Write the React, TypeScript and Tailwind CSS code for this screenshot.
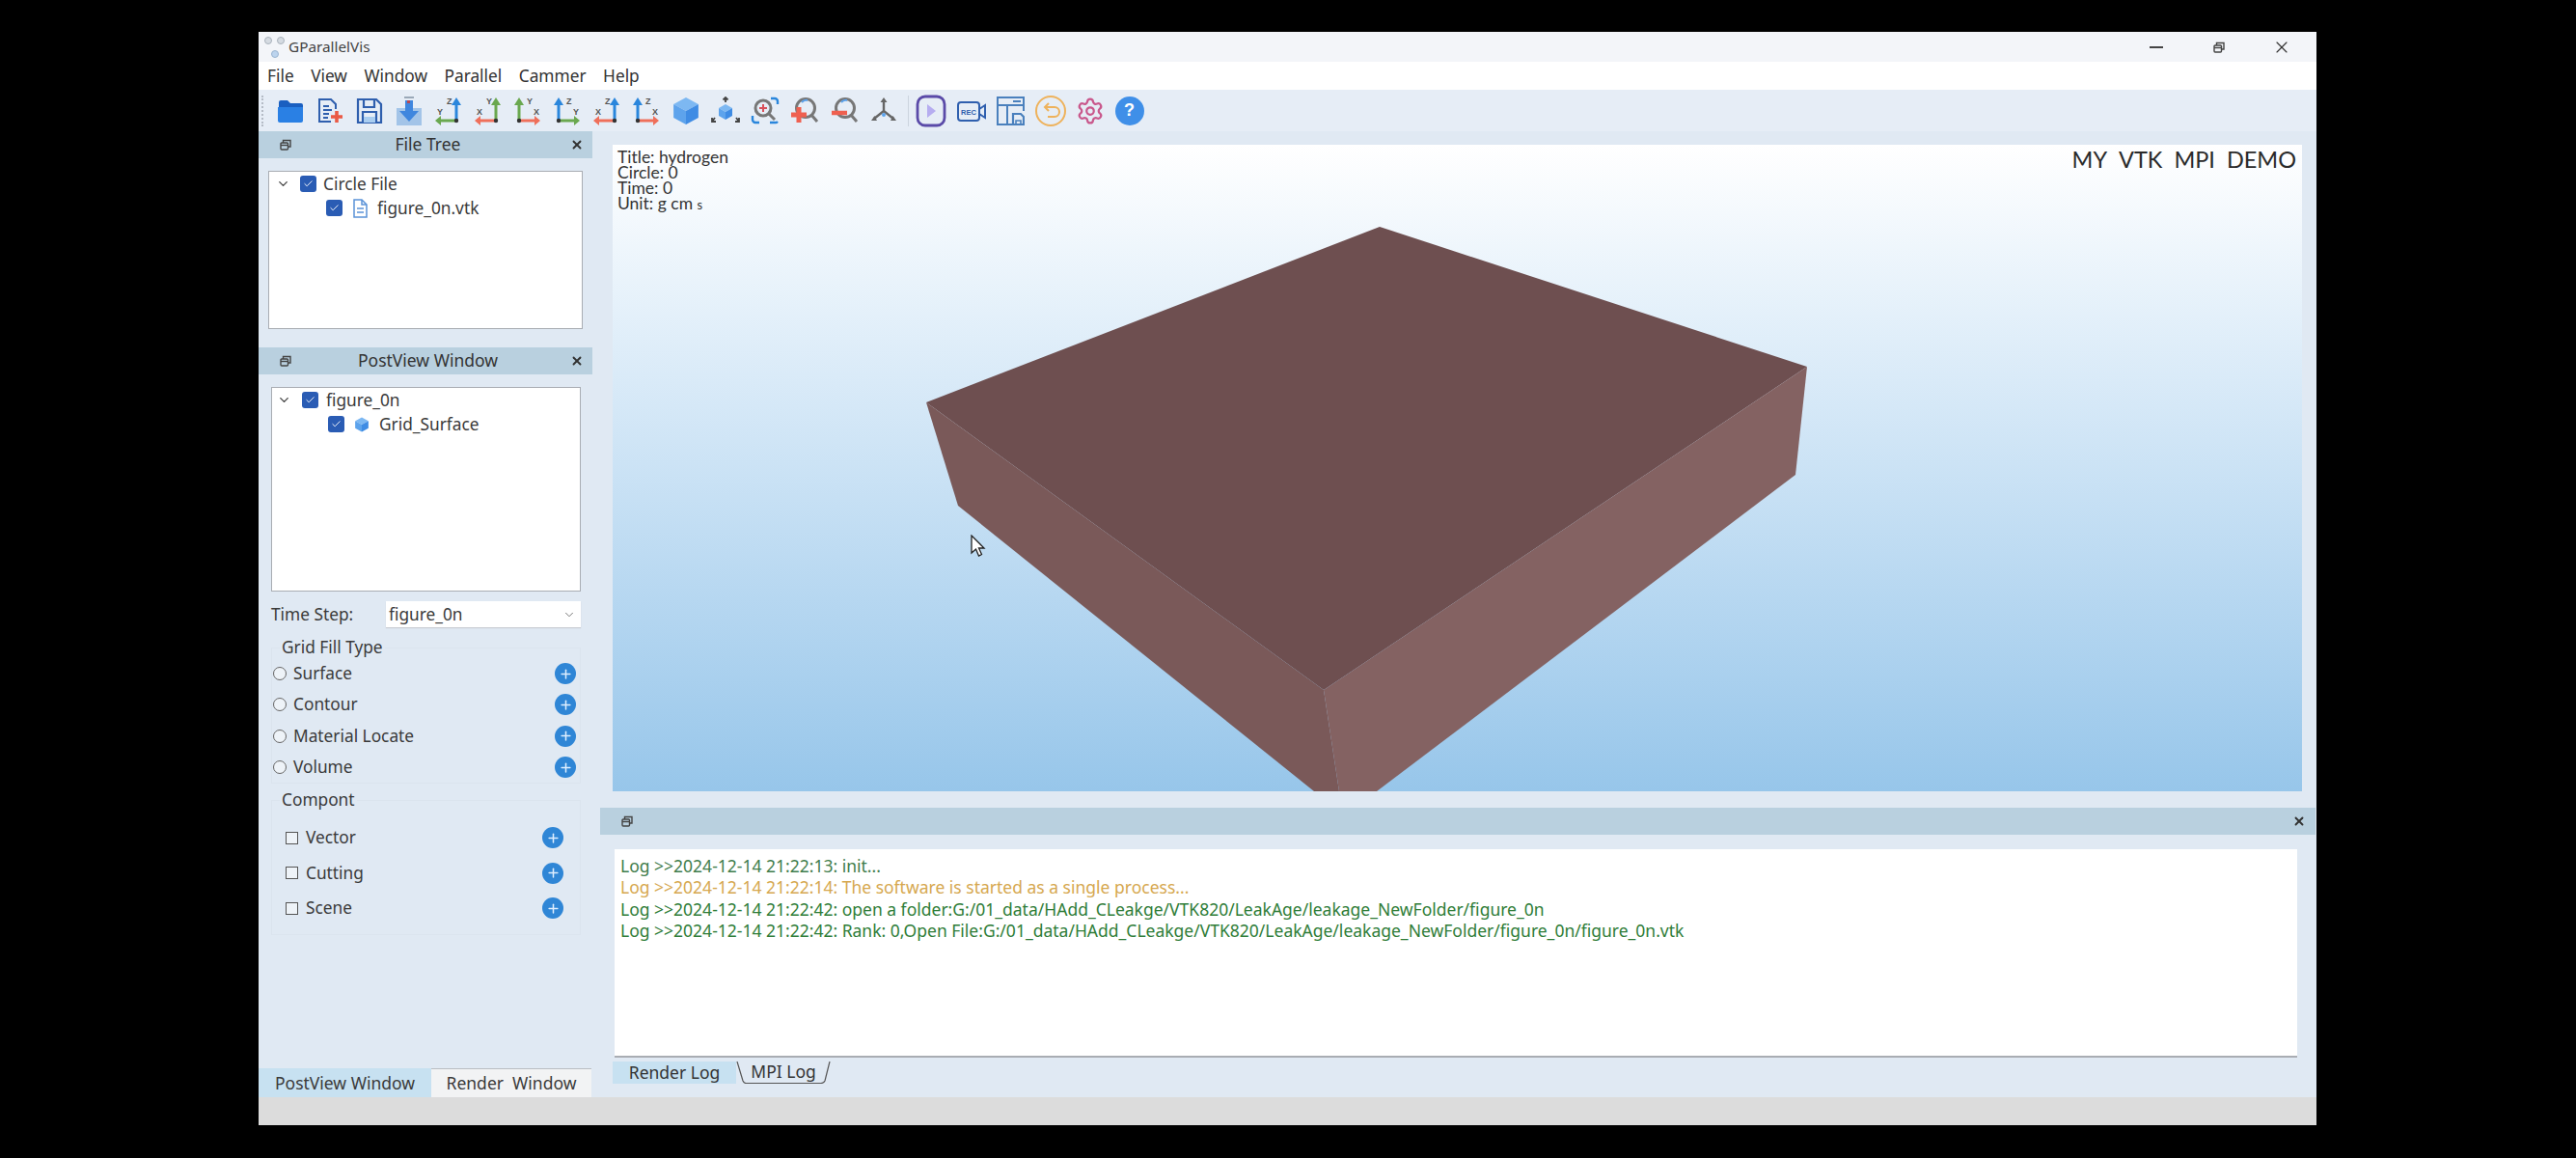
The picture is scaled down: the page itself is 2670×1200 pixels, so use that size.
import { Check, ChevronDown, Plus, Settings, X } from "lucide-react";

const RestoreIcon = () => (
  <svg width="12" height="12" viewBox="0 0 12 12" fill="none" stroke="#444" strokeWidth="1.4">
    <rect x="1" y="4" width="7.5" height="7" rx="1" />
    <path d="M3.5 4V1.5h7.5v6.5H8.5" />
    <path d="M1 6.5h7.5" />
  </svg>
);

type AxisProps = {
  dir: "left" | "right";
  hColor: string;
  hLabel: string;
  vColor: string;
  vLabel: string;
};

const AxisIcon = ({ dir, hColor, hLabel, vColor, vLabel }: AxisProps) => {
  const ox = dir === "left" ? 23 : 6;
  const tip = dir === "left" ? 1 : 28;
  const back = dir === "left" ? 7 : 22;
  return (
    <svg width="30" height="30" viewBox="0 0 30 30" className="shrink-0">
      <path d={`M${ox} 25H${back}`} stroke={hColor} strokeWidth="3" />
      <path d={`M${tip} 25L${back} 20V30Z`} fill={hColor} />
      <path d={`M${ox} 25V8`} stroke={vColor} strokeWidth="3" />
      <path d={`M${ox} 1L${ox - 5} 9H${ox + 5}Z`} fill={vColor} />
      <circle cx={ox} cy="25" r="2.2" fill="#333" />
      <text x={dir === "left" ? 13 : 14} y="8" fontSize="9" fontWeight="700" fill="#555" fontFamily="'Liberation Sans', sans-serif">
        {vLabel}
      </text>
      <text x={dir === "left" ? 3 : 21} y="19" fontSize="9" fontWeight="700" fill="#555" fontFamily="'Liberation Sans', sans-serif">
        {hLabel}
      </text>
    </svg>
  );
};

const CubeIcon = ({ size = 28 }: { size?: number }) => (
  <svg width={size} height={size} viewBox="0 0 28 28" className="shrink-0">
    <path d="M14 1L26 7.5L14 14L2 7.5Z" fill="#7db8f2" />
    <path d="M2 7.5L14 14V27L2 20.5Z" fill="#5da3ec" />
    <path d="M26 7.5L14 14V27L26 20.5Z" fill="#3f8ce4" />
  </svg>
);

const Toolbar = () => (
  <div className="flex h-[43px] items-center bg-[#e6edf6] pl-[3px]">
    <div className="h-[32px] w-[3px] border-l-2 border-dotted border-[#b5bcc6]" />
    <div className="ml-[12px] flex items-center gap-[11px]">
      <svg width="30" height="30" viewBox="0 0 30 30" className="shrink-0">
        <path d="M3 9V6a2 2 0 0 1 2-2h7l3 3h11a2 2 0 0 1 2 2v3H3Z" fill="#1a5fc0" />
        <path d="M2 11h26v14a2 2 0 0 1-2 2H4a2 2 0 0 1-2-2Z" fill="#2a80e4" />
      </svg>
      <svg width="30" height="30" viewBox="0 0 30 30" fill="none" className="shrink-0">
        <path d="M21 13V8l-5-5H4v23h12" stroke="#2f5fae" strokeWidth="2" />
        <path d="M8 10h6M8 14h9M8 18h6M8 22h5" stroke="#2f5fae" strokeWidth="2" />
        <path d="M22 15v12M16 21h12" stroke="#ea5a45" strokeWidth="3.6" />
      </svg>
      <svg width="30" height="30" viewBox="0 0 30 30" fill="none" stroke="#2f5fae" strokeWidth="2.2" className="shrink-0">
        <path d="M3 3h19l5 5v19H3Z" />
        <path d="M9 3v8h11V3M8 27V16h14v11" />
        <path d="M9 21h12v6H9Z" fill="#a9cdf0" stroke="none" />
      </svg>
      <svg width="30" height="30" viewBox="0 0 30 30" className="shrink-0">
        <path d="M2 12h26v18H2Z" fill="#a3c4e8" />
        <path d="M10 0h10v2H10Z" fill="#9aa8b8" />
        <path d="M11 4h8v11h6L15 26L5 15h6Z" fill="#3f86de" />
        <rect x="13" y="4" width="3" height="3" fill="#b54a55" />
      </svg>
      <AxisIcon dir="left" hColor="#6aa84f" hLabel="Y" vColor="#2a86dc" vLabel="Z" />
      <AxisIcon dir="left" hColor="#ef6f5a" hLabel="X" vColor="#6aa84f" vLabel="Y" />
      <AxisIcon dir="right" hColor="#ef6f5a" hLabel="X" vColor="#6aa84f" vLabel="Y" />
      <AxisIcon dir="right" hColor="#6aa84f" hLabel="Y" vColor="#2a86dc" vLabel="Z" />
      <AxisIcon dir="left" hColor="#ef6f5a" hLabel="X" vColor="#2a86dc" vLabel="Z" />
      <AxisIcon dir="right" hColor="#ef6f5a" hLabel="X" vColor="#2a86dc" vLabel="Z" />
      <CubeIcon size={30} />
      <svg width="30" height="30" viewBox="0 0 30 30" fill="none" className="shrink-0">
        <path d="M15 8l7 4-7 4-7-4Z" fill="#7db8f2" />
        <path d="M8 12l7 4v8l-7-4Z" fill="#5da3ec" />
        <path d="M22 12l-7 4v8l7-4Z" fill="#3f8ce4" />
        <path d="M15 6V1M12.5 3.5L15 1l2.500 2.500M4 22l-3 4M1 22v4h4M26 22l3 4M29 22v4h-4" stroke="#444" strokeWidth="1.800" />
      </svg>
      <svg width="30" height="30" viewBox="0 0 30 30" fill="none" className="shrink-0">
        <circle cx="13" cy="12" r="8" stroke="#777" strokeWidth="3" />
        <path d="M19 18l6 6" stroke="#777" strokeWidth="3" />
        <path d="M13 8v8M9 12h8" stroke="#d9505a" strokeWidth="2" />
        <path d="M21 2h4a3 3 0 0 1 3 3v3M2 20v4a3 3 0 0 0 3 3h4M20 27h5a3 3 0 0 0 3-1" stroke="#2a86dc" strokeWidth="2.400" />
      </svg>
      <svg width="30" height="30" viewBox="0 0 30 30" fill="none" className="shrink-0">
        <circle cx="16" cy="12" r="9.500" stroke="#777" strokeWidth="3" />
        <path d="M22 19l6 7" stroke="#777" strokeWidth="3" />
        <path d="M12 6a6 6 0 0 1 6-2" stroke="#5da3ec" strokeWidth="2" />
        <path d="M9 11v16M1 19h16" stroke="#ef6050" strokeWidth="5" />
      </svg>
      <svg width="30" height="30" viewBox="0 0 30 30" fill="none" className="shrink-0">
        <circle cx="16" cy="12" r="9.500" stroke="#777" strokeWidth="3" />
        <path d="M22 19l6 7" stroke="#777" strokeWidth="3" />
        <path d="M12 6a6 6 0 0 1 6-2" stroke="#5da3ec" strokeWidth="2" />
        <path d="M2 17h16" stroke="#ef6050" strokeWidth="4.500" />
      </svg>
      <svg width="30" height="30" viewBox="0 0 30 30" fill="none" stroke="#666" strokeWidth="2.400" className="shrink-0">
        <path d="M15 15V5M15 15L5 23M15 15l10 8" />
        <path d="M15 1l-3.500 5h7ZM2 25l6 0-2.500-5ZM28 25l-6 0 2.500-5Z" fill="#666" stroke="none" />
        <circle cx="15" cy="19" r="2" fill="#5da3ec" stroke="none" />
      </svg>
    </div>
    <div className="ml-[10px] h-[32px] w-px bg-[#ccd4de]" />
    <div className="ml-[7px] flex items-center gap-[10.5px]">
      <svg width="32" height="34" viewBox="0 0 32 34" fill="none" className="shrink-0">
        <rect x="2" y="2" width="28" height="30" rx="8" stroke="#5a4aa8" strokeWidth="2.800" />
        <path d="M12 10l9 7-9 7Z" fill="#b6adf0" />
      </svg>
      <svg width="30" height="30" viewBox="0 0 30 30" fill="none" className="shrink-0">
        <rect x="1" y="6" width="22" height="19" rx="3" stroke="#2f5fae" strokeWidth="2" />
        <path d="M23 13l6-4v13l-6-4" stroke="#2f5fae" strokeWidth="2" />
        <text x="4" y="19" fontSize="7.500" fontWeight="700" fill="#2f5fae" fontFamily="'Liberation Sans', sans-serif">
          REC
        </text>
      </svg>
      <svg width="30" height="32" viewBox="0 0 30 32" fill="none" stroke="#4a80bd" strokeWidth="2" className="shrink-0">
        <path d="M17 30H2V2h27v14" />
        <path d="M2 10h27M12 10v20M18 6h8" />
        <path d="M18 19h8l3 3v8H18Z" strokeWidth="2.200" />
        <path d="M21 30v-4h5v4" strokeWidth="1.600" />
      </svg>
      <svg width="32" height="34" viewBox="0 0 32 34" fill="none" stroke="#eeb25c" strokeWidth="2" className="shrink-0">
        <circle cx="16" cy="17" r="15" />
        <path d="M10 13h10a5 5 0 0 1 0 10h-7M14 9l-4 4 4 4" />
      </svg>
      <Settings size={30} strokeWidth={1.8} className="shrink-0 text-[#c9588c]" />
      <div className="flex h-[30px] w-[30px] shrink-0 items-center justify-center rounded-full bg-[#3f8fe8] font-['Liberation_Sans',sans-serif] text-[18px] font-bold text-white">
        ?
      </div>
    </div>
  </div>
);

const DockTitle = ({ title }: { title?: string }) => (
  <div className="flex h-[28px] items-center justify-between bg-[#b9d0df] pl-[22px] pr-[9px] text-[#333]">
    <RestoreIcon />
    <span className="mr-[6px] text-[17.5px] leading-none">{title}</span>
    <X size={14} strokeWidth={3.2} className="text-[#333]" />
  </div>
);

const Tick = ({ size = 17 }: { size?: number }) => (
  <span
    className="flex shrink-0 items-center justify-center rounded-[3px] bg-[#2a5cb4]"
    style={{ width: size, height: size }}
  >
    <Check size={11} strokeWidth={2} className="text-white" />
  </span>
);

const AddButton = () => (
  <span className="flex h-[22px] w-[22px] shrink-0 items-center justify-center rounded-full bg-[#2f86d6]">
    <Plus size={15} strokeWidth={2.4} className="text-[#dfefff]" />
  </span>
);

const fillRows = ["Surface", "Contour", "Material Locate", "Volume"];
const partRows = ["Vector", "Cutting", "Scene"];

const Sidebar = () => (
  <div className="flex w-[346px] shrink-0 flex-col text-[17.3px] text-[#3a3a3a]">
    <DockTitle title="File Tree" />
    <div className="ml-[10px] mt-[13px] h-[164px] w-[326px] border border-[#a9adb3] bg-white">
      <div className="flex h-[25px] items-center pl-[7px]">
        <ChevronDown size={15} strokeWidth={2.2} className="text-[#444]" />
        <span className="ml-[10px]"><Tick /></span>
        <span className="ml-[7px]">Circle File</span>
      </div>
      <div className="flex h-[25px] items-center pl-[59px]">
        <Tick />
        <svg width="18" height="20" viewBox="0 0 18 20" fill="none" stroke="#5b93d8" strokeWidth="1.500" className="ml-[9px] shrink-0">
          <path d="M3 1h8l5 5v13H3Z" />
          <path d="M6 10h7M6 14h7M11 1v5h5" />
        </svg>
        <span className="ml-[9px]">figure_0n.vtk</span>
      </div>
    </div>
    <div className="mt-[19px]">
      <DockTitle title="PostView Window" />
    </div>
    <div className="ml-[13px] mt-[13px] h-[212px] w-[321px] border border-[#a9adb3] bg-white">
      <div className="flex h-[25px] items-center pl-[5px]">
        <ChevronDown size={15} strokeWidth={2.2} className="text-[#444]" />
        <span className="ml-[11px]"><Tick /></span>
        <span className="ml-[8px]">figure_0n</span>
      </div>
      <div className="flex h-[25px] items-center pl-[58px]">
        <Tick />
        <span className="ml-[10px]"><CubeIcon size={16} /></span>
        <span className="ml-[10px]">Grid_Surface</span>
      </div>
    </div>
    <div className="ml-[13px] mt-[10px] flex h-[27px] w-[321px] items-center">
      <span className="w-[119px]">Time Step:</span>
      <div className="flex h-full flex-1 items-center justify-between bg-white pl-[3px] pr-[5px] shadow-[0_1px_1px_#c8ccd2]">
        <span>figure_0n</span>
        <ChevronDown size={14} strokeWidth={1.5} className="text-[#666]" />
      </div>
    </div>
    <fieldset className="ml-[13px] mt-[11px] w-[321px] border border-[#dbe4ee] pt-[1px]">
      <legend className="ml-[8px] px-[2px] leading-[20px]">Grid Fill Type</legend>
      {fillRows.map((row) => (
        <div key={row} className="flex h-[32.3px] items-center pl-px pr-[4px]">
          <span className="h-[14px] w-[14px] shrink-0 rounded-full border border-[#666] bg-[#eef3f8]" />
          <span className="ml-[7px] flex-1">{row}</span>
          <AddButton />
        </div>
      ))}
    </fieldset>
    <fieldset className="ml-[13px] mt-[7px] w-[321px] border border-[#dbe4ee] pb-[8px] pt-[11px]">
      <legend className="ml-[8px] px-[2px] leading-[20px]">Compont</legend>
      {partRows.map((row) => (
        <div key={row} className="flex h-[36.5px] items-center pl-[14px] pr-[17px]">
          <span className="h-[13px] w-[13px] shrink-0 border border-[#555] bg-[#eef3f8]" />
          <span className="ml-[8px] flex-1">{row}</span>
          <AddButton />
        </div>
      ))}
    </fieldset>
    <div className="mt-auto flex h-[30px] items-center text-[17.5px]">
      <div className="flex h-full w-[179px] items-center justify-center bg-[#c7e1f1]">PostView Window</div>
      <div className="flex h-full w-[166px] items-center justify-center border-t border-[#b9bdc2] bg-[#f2f3f4]">
        Render&nbsp; Window
      </div>
    </div>
  </div>
);

const Viewport = () => (
  <div className="relative ml-[13px] mt-[14px] h-[670px] w-[1751px] overflow-hidden bg-linear-to-b from-white to-[#97c6ea]">
    <svg width="1751" height="670" viewBox="0 0 1751 670">
      <path d="M795 85L1238 230L737 565L325 267Z" fill="#6e4f50" />
      <path d="M325 267L737 565L753 670H727L358 374Z" fill="#7a5959" />
      <path d="M737 565L1238 230L1226 342L792 670H753Z" fill="#846262" />
    </svg>
    <div className="absolute left-[5px] top-[5px] font-['Lato',sans-serif] text-[17.5px] leading-[16px] text-[#333]">
      <div>Title: hydrogen</div>
      <div>Circle: 0</div>
      <div>Time: 0</div>
      <div>
        Unit: g cm <span className="text-[13px]">s</span>
      </div>
    </div>
    <div className="absolute right-[6px] top-[0px] flex gap-[12px] font-['Lato',sans-serif] text-[23.5px] leading-[30px] text-[#2a2a2a]">
      <span>MY</span>
      <span>VTK</span>
      <span>MPI</span>
      <span>DEMO</span>
    </div>
    <svg width="16" height="24" viewBox="0 0 16 24" className="absolute left-[371px] top-[404px]">
      <path d="M1 1V19L5.500 15L8.500 22L11.500 20.500L8.500 14H14Z" fill="#fff" stroke="#222" strokeWidth="1.300" />
    </svg>
  </div>
);

const logLines = [
  { text: "Log >>2024-12-14 21:22:13: init...", color: "text-[#3f7d4c]" },
  { text: "Log >>2024-12-14 21:22:14: The software is started as a single process...", color: "text-[#d6a850]" },
  { text: "Log >>2024-12-14 21:22:42: open a folder:G:/01_data/HAdd_CLeakge/VTK820/LeakAge/leakage_NewFolder/figure_0n", color: "text-[#2f7d38]" },
  { text: "Log >>2024-12-14 21:22:42: Rank: 0,Open File:G:/01_data/HAdd_CLeakge/VTK820/LeakAge/leakage_NewFolder/figure_0n/figure_0n.vtk", color: "text-[#2f7d38]" },
];

const LogDock = () => (
  <>
    <div className="mt-[17px] flex h-[28px] w-[1778px] items-center justify-between bg-[#b9d0df] pl-[22px] pr-[10px]">
      <RestoreIcon />
      <X size={14} strokeWidth={3.2} className="text-[#333]" />
    </div>
    <div className="ml-[15px] mt-[15px] h-[216px] w-[1744px] border-b-2 border-[#a9adb3] bg-white pl-[6px] pt-[6px] text-[17.5px] leading-[22.3px]">
      {logLines.map((line) => (
        <div key={line.text} className={line.color}>
          {line.text}
        </div>
      ))}
    </div>
    <div className="ml-[13px] mt-[4px] flex h-[23px] text-[17.5px] text-[#333]">
      <div className="flex w-[128px] items-center justify-center bg-[#c7e1f1]">Render Log</div>
      <div className="flex items-stretch">
        <svg width="10" height="23" viewBox="0 0 10 23" fill="none" stroke="#555" strokeWidth="1.200" className="shrink-0">
          <path d="M1 0L7 20Q8 22.500 10 22.500" />
        </svg>
        <span className="flex w-[78px] items-center justify-center border-b border-[#555] leading-none">MPI Log</span>
        <svg width="10" height="23" viewBox="0 0 10 23" fill="none" stroke="#555" strokeWidth="1.200" className="shrink-0">
          <path d="M9 0L4 20Q3 22.500 0 22.500" />
        </svg>
      </div>
    </div>
  </>
);

export default function App() {
  return (
    <div className="h-[1200px] w-full bg-black pl-[268px] pt-[33px] font-['Noto_Sans',sans-serif]">
      <div className="flex h-[1133px] w-[2133px] flex-col bg-[#e0e9f3]">
        <div className="flex h-[31px] items-center bg-[#f3f5f9] pl-[5px]">
          <svg width="24" height="24" viewBox="0 0 24 24" className="shrink-0">
            <circle cx="5" cy="5" r="3.500" fill="#d5dbe2" stroke="#aab2bc" />
            <circle cx="18" cy="5" r="3.500" fill="#d5dbe2" stroke="#aab2bc" />
            <circle cx="12" cy="19" r="3.500" fill="#bcd4ee" stroke="#9ab4d0" />
          </svg>
          <span className="ml-[2px] text-[15.3px] text-[#444]">GParallelVis</span>
          <div className="ml-auto flex items-center pr-[26px]">
            <div className="h-[2px] w-[14px] bg-[#444]" />
            <span className="ml-[52px]"><RestoreIcon /></span>
            <X size={20} strokeWidth={1.4} className="ml-[49px] text-[#333]" />
          </div>
        </div>
        <div className="flex h-[29px] items-center gap-[17.5px] bg-white pl-[9px] text-[17.3px] text-[#333]">
          <span>File</span>
          <span>View</span>
          <span>Window</span>
          <span>Parallel</span>
          <span>Cammer</span>
          <span>Help</span>
        </div>
        <Toolbar />
        <div className="flex flex-1">
          <Sidebar />
          <div className="flex flex-1 flex-col pl-[8px]">
            <Viewport />
            <LogDock />
          </div>
        </div>
        <div className="h-[29px] bg-[#dcdcdc]" />
      </div>
    </div>
  );
}
